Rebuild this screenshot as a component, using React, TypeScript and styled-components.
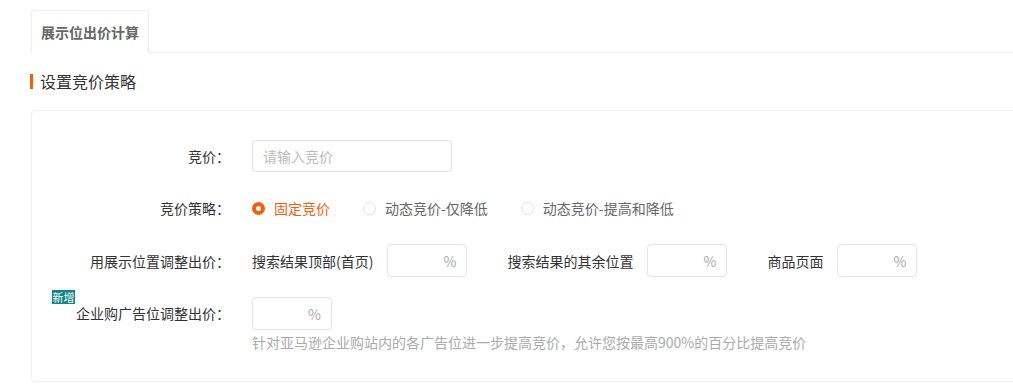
import React, { FC, useState } from "react";
import styled, { createGlobalStyle } from "styled-components";

const orange = "#f2600c";

const GlobalStyle = createGlobalStyle`
  body {
    margin: 0;
    background: #fff;
    font-family: "Noto Sans CJK SC", "Noto Sans", sans-serif;
    font-size: 14px;
    color: #333;
  }
`;

interface OptionProps {
  label: string;
  checked: boolean;
  onSelect: () => void;
}

const RadioOption: FC<OptionProps> = ({ label, checked, onSelect }) => (
  <Option $checked={checked} onClick={onSelect}>
    <Dot $checked={checked} />
    {label}
  </Option>
);

const strategies = ["固定竞价", "动态竞价-仅降低", "动态竞价-提高和降低"];

const placements = ["搜索结果顶部(首页)", "搜索结果的其余位置", "商品页面"];

const App: FC = () => {
  const [strategy, setStrategy] = useState(0);

  return (
    <Page>
      <GlobalStyle />
      <TabBar>
        <Tab>展示位出价计算</Tab>
      </TabBar>

      <SectionTitle>设置竞价策略</SectionTitle>

      <Card>
        <Row>
          <Label>竞价：</Label>
          <TextInput placeholder="请输入竞价" />
        </Row>

        <Row>
          <Label>竞价策略：</Label>
          {strategies.map((s, i) => (
            <RadioOption
              key={s}
              label={s}
              checked={strategy === i}
              onSelect={() => setStrategy(i)}
            />
          ))}
        </Row>

        <Row>
          <Label>用展示位置调整出价：</Label>
          {placements.map((p) => (
            <Placement key={p}>
              <span>{p}</span>
              <PercentBox>
                <PercentInput />
                <Unit>%</Unit>
              </PercentBox>
            </Placement>
          ))}
        </Row>

        <Row $top>
          <Label>
            <LabelText>
              <Badge>新增</Badge>
              企业购广告位调整出价：
            </LabelText>
          </Label>
          <Field>
            <PercentBox>
              <PercentInput />
              <Unit>%</Unit>
            </PercentBox>
            <Help>
              针对亚马逊企业购站内的各广告位进一步提高竞价，允许您按最高900%的百分比提高竞价
            </Help>
          </Field>
        </Row>
      </Card>
    </Page>
  );
};

const Page = styled.div`
  padding: 10px 0 0 30px;
  overflow: hidden;
`;

const TabBar = styled.div`
  display: flex;
  margin-left: 1px;
  border-bottom: 1px solid #eee;
`;

const Tab = styled.div`
  height: 41px;
  padding: 0 9px;
  margin-bottom: -1px;
  display: flex;
  align-items: center;
  border: 1px solid #eee;
  border-bottom-color: #fff;
  border-radius: 4px 4px 0 0;
  background: #fff;
  font-size: 14px;
  font-weight: bold;
  color: #666;
`;

const SectionTitle = styled.div`
  margin-top: 18px;
  display: flex;
  align-items: center;
  height: 20px;
  font-size: 16px;
  color: #333;

  &::before {
    content: "";
    width: 3px;
    height: 15px;
    margin-right: 7px;
    background: ${orange};
  }
`;

const Card = styled.div`
  margin: 19px -10px 0 1px;
  padding: 29px 0 29px;
  border: 1px solid #eee;
  border-radius: 4px;
  display: flex;
  flex-direction: column;
  gap: 20px;
`;

const Row = styled.div<{ $top?: boolean }>`
  display: flex;
  align-items: ${(p) => (p.$top ? "flex-start" : "center")};
  min-height: 32px;
`;

const Label = styled.div`
  width: 220px;
  padding-right: 22px;
  box-sizing: border-box;
  flex-shrink: 0;
  text-align: right;
  line-height: 32px;
  color: #333;
`;

const LabelText = styled.span`
  position: relative;
`;

const Badge = styled.span`
  position: absolute;
  left: -24px;
  top: -13px;
  width: 23px;
  height: 14px;
  background: #128585;
  color: #fff;
  font-size: 11px;
  line-height: 14px;
  text-align: center;
`;

const TextInput = styled.input`
  width: 200px;
  height: 32px;
  box-sizing: border-box;
  padding: 0 10px;
  border: 1px solid #e0e0e0;
  border-radius: 4px;
  font-family: inherit;
  font-size: 14px;
  outline: none;

  &::placeholder {
    color: #bbb;
  }
`;

const Option = styled.label<{ $checked: boolean }>`
  display: flex;
  align-items: center;
  gap: 9px;
  margin-right: 33px;
  cursor: pointer;
  color: ${(p) => (p.$checked ? orange : "#666")};
`;

const Dot = styled.span<{ $checked: boolean }>`
  width: 13px;
  height: 13px;
  box-sizing: border-box;
  border-radius: 50%;
  border: ${(p) => (p.$checked ? `4px solid ${orange}` : "1px solid #e2e2e2")};
  background: #fff;
`;

const Placement = styled.div`
  display: flex;
  align-items: center;
  gap: 14px;
  margin-right: 40px;
  color: #333;
`;

const PercentBox = styled.div`
  width: 80px;
  height: 33px;
  box-sizing: border-box;
  display: flex;
  align-items: center;
  padding: 0 10px 0 8px;
  border: 1px solid #e4e4e4;
  border-radius: 4px;
`;

const PercentInput = styled.input`
  flex: 1;
  min-width: 0;
  border: none;
  outline: none;
  font-family: inherit;
  font-size: 14px;
`;

const Unit = styled.span`
  color: #aaa;
`;

const Field = styled.div`
  display: flex;
  flex-direction: column;
  gap: 2px;
`;

const Help = styled.div`
  color: #aaa;
  font-size: 14px;
  line-height: 20px;
`;

export default App;
